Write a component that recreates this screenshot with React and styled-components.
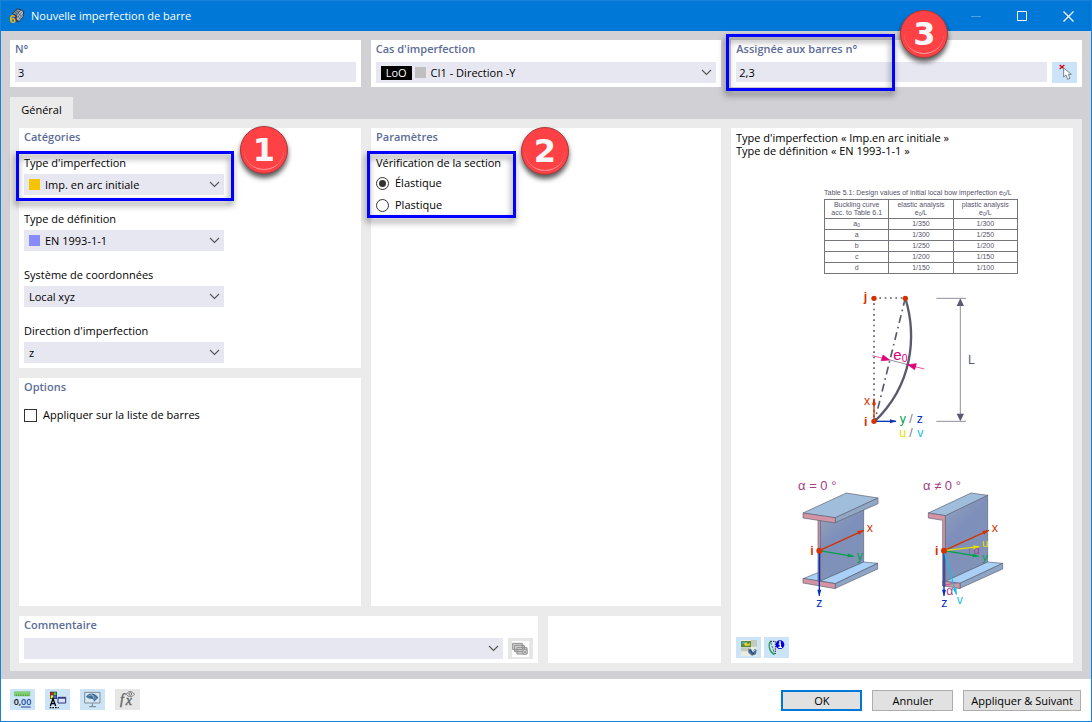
import React, { useState } from "react";
import styled, { createGlobalStyle } from "styled-components";

const GlobalStyle = createGlobalStyle`
  * {
    box-sizing: border-box;
  }
  body {
    margin: 0;
    background: white;
  }
  body, button, input, select {
    font-family: "Open Sans", "Noto Sans", sans-serif;
    font-size: 11px;
    color: black;
  }
`;

const Window = styled.div`
  min-height: 100vh;
  display: flex;
  flex-direction: column;
  border: 1px solid #1a82d6;
  background: white;
`;

const TitleBar = styled.header`
  height: 30px;
  padding-left: 8px;
  display: flex;
  align-items: center;
  gap: 6px;
  background: #0078d7;
`;

const Title = styled.h1`
  flex: 1;
  margin: 0;
  font-size: 11px;
  font-weight: 400;
  line-height: 18px;
  color: white;
`;

const Controls = styled.div`
  display: flex;
`;

const WindowButton = styled.button`
  width: 46px;
  height: 30px;
  padding: 0;
  border: none;
  display: flex;
  align-items: center;
  justify-content: center;
  background: transparent;
  opacity: ${(props) => (props.disabled ? 0.3 : 1)};
`;

const Body = styled.main`
  flex: 1;
  display: flex;
  flex-direction: column;
  padding: 9px 9px 8px;
  background: #d1d0d5;
`;

const TopRow = styled.div`
  display: grid;
  grid-template-columns: repeat(3, minmax(0, 1fr));
  gap: 10px;
`;

const Card = styled.section`
  position: relative;
  padding: 0 5px 4px;
  background: white;
`;

const CardTitle = styled.h2`
  margin: 0 0 ${(props) => (props.$loose ? "9px" : "4px")};
  font-size: 11px;
  font-weight: 600;
  line-height: 18px;
  color: #5c6c98;
`;

const TitleLabel = styled(CardTitle).attrs({ as: "label" })`
  display: block;
`;

const TextInput = styled.input`
  display: block;
  width: 100%;
  height: 20px;
  padding: 1px 3px 0;
  border: none;
  border-radius: 0;
  background: #e7e7f1;
`;

const Row = styled.div`
  display: flex;
  gap: 5px;
`;

const SelectBox = styled.div`
  flex: 1;
  height: 21px;
  padding: 0 4px 0 5px;
  display: flex;
  align-items: center;
  background: #e7e7f1;
`;

const NativeSelect = styled.select`
  flex: 1;
  min-width: 0;
  height: 21px;
  padding: 0 0 1px;
  border: none;
  appearance: none;
  background: transparent;
`;

const Swatch = styled.span`
  width: 11px;
  height: 11px;
  margin-right: 5px;
  background: ${(props) => props.$color};
`;

const Tag = styled.span`
  height: 14px;
  padding: 0 5px;
  margin-right: 3px;
  line-height: 14px;
  color: white;
  background: black;
`;

const Tab = styled.button`
  align-self: flex-start;
  width: 63px;
  height: 22px;
  margin-top: 10px;
  padding: 3px 0 0;
  border: none;
  background: #ebebeb;
`;

const Panel = styled.div`
  flex: 1;
  display: grid;
  grid-template-columns: minmax(0, 342fr) minmax(0, 350fr) minmax(0, 342fr);
  grid-template-rows: 1fr auto;
  gap: 10px;
  padding: 9px 9px 8px;
  background: #ebebeb;
`;

const Column = styled.div`
  display: flex;
  flex-direction: column;
  gap: 10px;
`;

const GrowCard = styled(Card)`
  flex: 1;
`;

const Fields = styled.div`
  width: 200px;
  padding-bottom: 1px;
  display: flex;
  flex-direction: column;
  gap: 16px;
`;

const FieldBox = styled.div`
  position: relative;
`;

const FieldLabel = styled.label`
  display: block;
  margin-bottom: 3px;
  line-height: 16px;
`;

const RadioGroup = styled.fieldset`
  margin: 0;
  padding: 0;
  border: none;
`;

const Legend = styled.legend`
  padding: 0;
  margin-bottom: 2px;
  line-height: 16px;
`;

const Choice = styled.label`
  height: 20px;
  display: flex;
  align-items: center;
  gap: 6px;
  line-height: 16px;
  & + & {
    margin-top: 2px;
  }
`;

const Radio = styled.input`
  appearance: none;
  width: 13px;
  height: 13px;
  margin: 0;
  border: 1px solid #333;
  border-radius: 50%;
  background: white;
  &:checked {
    background: #333;
    background-clip: content-box;
    padding: 2px;
  }
`;

const Checkbox = styled(Radio)`
  border-radius: 0;
`;

const BottomRow = styled.div`
  grid-column: 1 / 3;
  grid-row: 2;
  display: grid;
  grid-template-columns: 3fr 1fr;
  gap: 10px;
`;

const Preview = styled(Card)`
  grid-column: 3;
  grid-row: 1 / 3;
  display: flex;
  flex-direction: column;
  padding: 3px 5px 5px;
`;

const PreviewText = styled.p`
  margin: 0;
  line-height: 13px;
`;

const Figure = styled.figure`
  width: 244px;
  margin: 31px auto 16px;
  display: flex;
  flex-direction: column;
  gap: 20px;
`;

const Bow = styled.svg`
  display: block;
  margin: -14px 0 0 60px;
`;

const ValueTable = styled.table`
  width: 194px;
  margin-left: 44px;
  table-layout: fixed;
  border-collapse: collapse;
  font-family: "Liberation Sans", Arial, sans-serif;
  font-size: 7px;
  line-height: 8px;
  text-align: center;
  color: #55546a;
  caption {
    height: 11px;
    line-height: 10px;
    white-space: nowrap;
    text-align: left;
  }
  th, td {
    padding: 1px 0;
    border: 1px solid #77767c;
    font-weight: 400;
  }
  sub {
    font-size: 5px;
    line-height: 0;
    vertical-align: -1px;
  }
`;

const IconButton = styled.button`
  flex: none;
  width: 25px;
  height: 21px;
  padding: 0;
  border: none;
  display: flex;
  align-items: center;
  justify-content: center;
  background: ${(props) => (props.disabled ? "#e6e6e6" : "#cce4f7")};
`;

const PreviewTools = styled.div`
  margin-top: auto;
  display: flex;
  gap: 3px;
`;

const Footer = styled.footer`
  padding: 10px 9px;
  display: flex;
  gap: 10px;
`;

const Actions = styled.div`
  margin-left: auto;
  padding-right: 1px;
  display: flex;
  gap: 10px;
`;

const Button = styled.button`
  min-width: 81px;
  height: 21px;
  margin-top: 1px;
  padding: 0 7px;
  border: ${(props) => (props.$primary ? "2px solid #0078d7" : "1px solid #adadad")};
  background: #e1e1e1;
`;

// annotations laid over the dialog
const Outline = styled.div`
  position: absolute;
  top: ${(props) => props.$top}px;
  left: ${(props) => props.$left}px;
  width: ${(props) => props.$width}px;
  height: ${(props) => props.$height}px;
  border: 3px solid #0000ff;
  filter: drop-shadow(-1px 4px 3px rgba(0, 0, 0, 0.5));
  pointer-events: none;
`;

const Step = styled.div`
  position: absolute;
  top: ${(props) => props.$top}px;
  left: ${(props) => props.$left}px;
  z-index: 1;
  width: 48px;
  height: 48px;
  border: 1px solid #a83a3e;
  border-radius: 50%;
  font-family: "DejaVu Sans", Verdana, sans-serif;
  font-size: 32px;
  font-weight: 700;
  line-height: 46px;
  text-align: center;
  color: #f7f7fa;
  background: #fd4144;
  box-shadow: 0 4px 5px rgba(0, 0, 0, 0.65);
  &::after {
    content: "";
    position: absolute;
    inset: 3px;
    border-radius: 50%;
    border-bottom: 1px solid #ff9496;
  }
`;

function Chevron() {
  return (
    <svg width="11" height="7" viewBox="0 0 11 7" fill="none" stroke="#555" strokeWidth="1.1">
      <path d="M1 1l4.5 4.4L10 1" />
    </svg>
  );
}

function Select({ id, value, color, tag }) {
  return (
    <SelectBox>
      {tag && <Tag>{tag}</Tag>}
      {color && <Swatch $color={color} />}
      <NativeSelect id={id} defaultValue={value}>
        <option value={value}>{value}</option>
      </NativeSelect>
      <Chevron />
    </SelectBox>
  );
}

function Field({ id, label, value, color, children }) {
  return (
    <FieldBox>
      <FieldLabel htmlFor={id}>{label}</FieldLabel>
      <Select id={id} value={value} color={color} />
      {children}
    </FieldBox>
  );
}

function AppIcon() {
  return (
    <svg width="16" height="16" viewBox="0 0 48 48">
      <path d="M8 17L25 1l12 3 9 8-4 17-13 14-10-3-4-20z" fill="#2d3846" />
      <path d="M12 16L26 4l8 3-12 14z" fill="#8496ab" />
      <path d="M24 22L36 7l6 5-1 14-11 13-7-5z" fill="#b5c2d0" />
      <path d="M17 12l8 6M21 8l8 5M29 17l8 7m-13-1l10 10M38 12L25 29m17-11L29 35" stroke="#394654" strokeWidth="2" />
      <text x="1" y="44" fontFamily="Liberation Sans" fontWeight="700" fontSize="35" fill="#f0b40c">6</text>
    </svg>
  );
}

function PickIcon() {
  return (
    <svg width="20" height="18" viewBox="0 0 60 54" fill="none">
      <path d="M17 3l14 12M31 3L17 15" stroke="#e00010" strokeWidth="4" />
      <path d="M29 12v27l7-6 5 13 7-3-5-12h9z" fill="white" stroke="#77808a" strokeWidth="3" />
    </svg>
  );
}

function CopiesIcon() {
  return (
    <svg width="17" height="16" viewBox="0 0 51 48">
      <path fill="white" d="M0 0h51v48H0z" />
      <g fill="#d2d2d2" stroke="#8f8f8f" strokeWidth="3">
        <path d="M2 7h29v19H2zM8 13h29v19H8zM15 20h30v19H15z" />
        <path d="M33 26h12v13H33zM35 28l8 9m0-9l-8 9" fill="white" />
      </g>
    </svg>
  );
}

function ImageSettingsIcon() {
  return (
    <svg width="16" height="16" viewBox="0 0 48 48">
      <path fill="#e9ecdf" d="M0 0h48v48H0z" />
      <path fill="#c4c9bb" d="M30 0h18v20H30zM0 22h30v12H0z" />
      <path fill="#5c8a3c" d="M0 3h30v18H0z" />
      <path fill="#46a6bd" d="M3 5h12l-6 8H3z" />
      <path fill="#e6d22e" d="M8 11l8-5 4 7 6-4 2 7-14 2z" />
      <path d="M22 26l9 2 3 7 8-9 5 4-2 13-12 4-11-9z" fill="#4b6c98" />
      <path d="M27 31l11 11" stroke="#192c49" strokeWidth="3" />
      <path d="M35 36l8-6" stroke="#c1daf4" strokeWidth="3" />
    </svg>
  );
}

function BowInfoIcon() {
  return (
    <svg width="17" height="16" viewBox="0 0 51 48" fill="none">
      <path d="M8 3C-1 15 4 35 19 44" stroke="#24a465" strokeWidth="4" />
      <path d="M8 4h14v38" stroke="#222" strokeWidth="3" strokeDasharray="4 3" />
      <path d="M8 7l12 35" stroke="#333" strokeWidth="2" strokeDasharray="8 3" />
      <circle cx="36" cy="14" r="13" fill="#0000dd" />
      <path d="M32 12h5v10M31 22h11" stroke="white" strokeWidth="4" />
      <circle cx="36" cy="6" r="3" fill="white" />
    </svg>
  );
}

function UnitsIcon() {
  return (
    <svg width="19" height="17" viewBox="0 0 57 51">
      <path fill="#7ed36e" stroke="#62a756" d="M4 2h47v13H4z" />
      <path d="M10 15v-5m7 5v-5m7 5v-5m7 5v-5m7 5v-5m7 5v-5" stroke="#417c37" strokeWidth="2" />
      <text x="2" y="42" fontFamily="Open Sans" fontSize="27" fontWeight="600" fill="#111">0,</text>
      <text x="24" y="42" fontFamily="Open Sans" fontSize="27" fontWeight="600" fill="#27449b">00</text>
      <path d="M24 48h29" stroke="#27449b" strokeWidth="3" />
    </svg>
  );
}

function DisplayIcon() {
  return (
    <svg width="18" height="18" viewBox="0 0 54 54">
      <path fill="#333" d="M3 2h21v22H3z" />
      <path fill="#ef1212" d="M5 4h8v8H5z" />
      <path fill="#36d036" d="M14 4h8v8h-8z" />
      <path fill="#ffe81a" d="M5 13h8v9H5z" />
      <path fill="#3764ff" d="M14 13h8v9h-8z" />
      <path d="M4 45l8-22 8 22M7 38h10" fill="none" stroke="black" strokeWidth="4" />
      <path d="M2 50h27" stroke="black" strokeWidth="4" strokeDasharray="5 3" />
      <path d="M27 19h23v17H27z" fill="#dce2ff" stroke="#273579" strokeWidth="3" />
      <path d="M27 21h23" stroke="#273579" strokeWidth="4" />
    </svg>
  );
}

function MonitorIcon() {
  return (
    <svg width="17" height="17" viewBox="0 0 51 51" fill="none">
      <path d="M2 4h46v32H2z" fill="#d4e7f5" stroke="#858d94" strokeWidth="3" />
      <path d="M25 37v8M15 47h21" stroke="#777f86" strokeWidth="3" />
      <path d="M6 17C16 4 32 4 43 20L30 32c0-6-4-9-9-9-5 0-9-2-15-6z" fill="#416f99" />
      <path d="M13 15c9-5 17-2 22 8M21 9c4 3 8 8 9 17" stroke="#a8c8df" strokeWidth="2" />
    </svg>
  );
}

function FormulaIcon() {
  return (
    <svg width="17" height="17" viewBox="0 0 51 51" fill="none">
      <text x="3" y="40" fontFamily="Liberation Serif" fontStyle="italic" fontSize="42" fill="#606060" stroke="#606060">f</text>
      <text x="20" y="43" fontFamily="Liberation Serif" fontStyle="italic" fontSize="42" fill="#606060" stroke="#606060">x</text>
      <path d="M22 10c6-11 18-11 24 0-6 9-18 9-24 0z" stroke="#777" strokeWidth="3" />
      <circle cx="34" cy="9" r="4" stroke="#777" strokeWidth="3" />
    </svg>
  );
}

function Arrow({ x1, y1, x2, y2, color, width = 4, size = 20 }) {
  const angle = (Math.atan2(y2 - y1, x2 - x1) * 180) / Math.PI;
  return (
    <g stroke={color} fill={color}>
      <line x1={x1} y1={y1} x2={x2} y2={y2} strokeWidth={width} />
      <path d={`M2 0l-${size} -6v12z`} stroke="none" transform={`translate(${x2} ${y2}) rotate(${angle})`} />
    </g>
  );
}

function BowDrawing() {
  return (
    <Bow width="160" height="170" viewBox="0 0 480 510" fontFamily="Liberation Sans" fontSize="37">
      <g fill="none" stroke="#5a596d">
        <path d="M102 54v370M102 54h95" strokeWidth="5" strokeDasharray="5 11" />
        <path d="M196 54L104 424" strokeWidth="5" strokeDasharray="24 12 5 12" />
        <path d="M196 54C231 170 218 315 104 424" strokeWidth="7" />
        <path d="M289 55h89M289 424h89M361 60v360M150 240l54 14" strokeWidth="2" />
      </g>
      <path d="M361 55l-11 23h22zM361 424l-11-23h22z" fill="#5a596d" />
      <g fill="#e00078" stroke="#e00078" strokeWidth="2">
        <path d="M97 227l52 13M253 267l-50-13" />
        <path d="M149 240l-25 2 5-17zM203 254l26-3-5 18z" />
      </g>
      <Arrow x1={102} y1={424} x2={102} y2={356} color="#d23200" />
      <Arrow x1={102} y1={424} x2={168} y2={424} color="#0036b4" />
      <g fill="#d23200">
        <circle cx="102" cy="55" r="8" />
        <circle cx="196" cy="55" r="8" />
        <circle cx="102" cy="424" r="8" />
        <text x="71" y="63" fontWeight="700">j</text>
        <text x="72" y="439" fontWeight="700">i</text>
        <text x="72" y="374">x</text>
      </g>
      <text x="160" y="239" fontSize="45" fill="#e00078">e<tspan dy="7" fontSize="31">0</tspan></text>
      <text x="384" y="251" fill="#5a596d">L</text>
      <text x="179" y="428" fill="#00a14b">y</text>
      <text x="208" y="428" fill="#77767f">/</text>
      <text x="230" y="428" fill="#0030bd">z</text>
      <text x="178" y="470" fill="#e4df00">u</text>
      <text x="208" y="470" fill="#77767f">/</text>
      <text x="232" y="470" fill="#1bbfe0">v</text>
    </Bow>
  );
}

function BeamDrawing() {
  return (
    <svg width="244" height="150" viewBox="0 0 732 450" fontFamily="Liberation Sans" fontSize="37">
      <defs>
        <linearGradient id="web" x1="0" y1="0" x2="0.5" y2="1">
          <stop offset="0" stopColor="#98a6bd" />
          <stop offset="0.45" stopColor="#7d8fba" />
          <stop offset="1" stopColor="#8293b8" />
        </linearGradient>
      </defs>
      <text x="54" y="61" fontSize="39" fill="#aa3c84">α = 0 °</text>
      <text x="429" y="61" fontSize="39" fill="#aa3c84">α ≠ 0 °</text>
      <g stroke="#5b6073" strokeWidth="2" strokeLinejoin="round">
        {/* full section */}
        <path d="M69 326l48-19v18l80-41 96-4-127 61z" fill="#a9d0f7" />
        <path d="M121 150l130-30v156l-130 58z" fill="url(#web)" />
        <path d="M251 276l42 4-127 61-45-8z" fill="#a9d0f7" />
        <path d="M166 341l127-61v17l-127 58z" fill="#8ea5c6" />
        <path d="M69 325l97 16v15l-97-17z" fill="#d494a4" />
        <path d="M114 149h7v184h-7z" fill="#d494a4" />
        <path d="M69 129L199 69l95 15-128 60z" fill="#a0bddb" />
        <path d="M166 143l128-59v17l-128 57z" fill="#91a7c4" />
        <path d="M69 129l97 14v16l-97-15z" fill="#d494a4" />
        {/* half section */}
        <path d="M496 136l127-61v201l-127 58z" fill="url(#web)" />
        <path d="M623 276l45 4-128 60-44-6z" fill="#a9d0f7" />
        <path d="M540 340l128-60v17l-128 58z" fill="#8ea5c6" />
        <path d="M488 333l52 7v16l-52-9z" fill="#d494a4" />
        <path d="M445 129l128-60 50 7-127 61z" fill="#a0bddb" />
        <path d="M445 129l51 8v212l-8-2V151l-43-7z" fill="#d494a4" />
      </g>
      <path d="M569 235q-2 10 0 17M494 345l34-6" fill="none" stroke="#aa3c84" strokeWidth="2" />
      <text x="581" y="252" fontSize="32" fill="#aa3c84">α</text>
      <text x="499" y="376" fill="#aa3c84">α</text>

      <Arrow x1={118} y1={242} x2={251} y2={181} color="#d23200" />
      <Arrow x1={118} y1={242} x2={221} y2={259} color="#00a14b" />
      <Arrow x1={118} y1={242} x2={118} y2={377} color="#0030bd" />
      <Arrow x1={492} y1={242} x2={626} y2={181} color="#d23200" />
      <Arrow x1={492} y1={242} x2={596} y2={259} color="#00a14b" />
      <Arrow x1={492} y1={242} x2={598} y2={230} color="#e4df00" />
      <Arrow x1={492} y1={242} x2={492} y2={377} color="#0030bd" />
      <Arrow x1={492} y1={242} x2={529} y2={373} color="#1bbfe0" />
      <g fill="#d23200">
        <circle cx="118" cy="242" r="9" />
        <circle cx="492" cy="242" r="9" />
        <text x="91" y="255" fontWeight="700">i</text>
        <text x="465" y="255" fontWeight="700">i</text>
        <text x="260" y="185">x</text>
        <text x="635" y="185">x</text>
      </g>
      <text x="230" y="270" fill="#00a14b">y</text>
      <text x="606" y="272" fontSize="34" fill="#00a14b">y</text>
      <text x="606" y="232" fontSize="34" fill="#e4df00">u</text>
      <text x="109" y="411" fill="#0030bd">z</text>
      <text x="484" y="411" fill="#0030bd">z</text>
      <text x="530" y="403" fill="#1bbfe0">v</text>
    </svg>
  );
}

const rows = [
  [<>a<sub>0</sub></>, "1/350", "1/300"],
  ["a", "1/300", "1/250"],
  ["b", "1/250", "1/200"],
  ["c", "1/200", "1/150"],
  ["d", "1/150", "1/100"],
];

function Values() {
  return (
    <ValueTable>
      <caption>Table 5.1: Design values of initial local bow imperfection e<sub>0</sub>/L</caption>
      <thead>
        <tr>
          <th>Buckling curve<br />acc. to Table 6.1</th>
          <th>elastic analysis<br />e<sub>0</sub>/L</th>
          <th>plastic analysis<br />e<sub>0</sub>/L</th>
        </tr>
      </thead>
      <tbody>
        {rows.map((row, i) => (
          <tr key={i}>
            {row.map((cell, j) => <td key={j}>{cell}</td>)}
          </tr>
        ))}
      </tbody>
    </ValueTable>
  );
}

function WindowControls() {
  return (
    <Controls>
      <WindowButton disabled aria-label="Réduire">
        <svg width="11" height="11"><path d="M0 5.5h10" stroke="white" /></svg>
      </WindowButton>
      <WindowButton aria-label="Agrandir">
        <svg width="11" height="11"><path d="M.5 .5h9v9H.5z" fill="none" stroke="white" /></svg>
      </WindowButton>
      <WindowButton aria-label="Fermer">
        <svg width="11" height="11"><path d="M.5 .5l10 10M10.5 .5l-10 10" fill="none" stroke="white" strokeWidth="1.2" /></svg>
      </WindowButton>
    </Controls>
  );
}

function App() {
  const [section, setSection] = useState("elastique");

  return (
    <>
      <GlobalStyle />
      <Window>
        <TitleBar>
          <AppIcon />
          <Title>Nouvelle imperfection de barre</Title>
          <WindowControls />
        </TitleBar>
        <Body>
          <TopRow>
            <Card>
              <TitleLabel htmlFor="numero">N°</TitleLabel>
              <TextInput id="numero" defaultValue="3" />
            </Card>
            <Card>
              <TitleLabel htmlFor="cas">Cas d'imperfection</TitleLabel>
              <Row>
                <Select id="cas" value="CI1 - Direction -Y" tag="LoO" color="#c0c0c0" />
              </Row>
            </Card>
            <Card>
              <TitleLabel htmlFor="barres">Assignée aux barres n°</TitleLabel>
              <Row>
                <TextInput id="barres" defaultValue="2,3" />
                <IconButton aria-label="Sélectionner les barres"><PickIcon /></IconButton>
              </Row>
              <Outline $top={-6} $left={-5} $width={169} $height={57} />
              <Step $top={-30} $left={169}>3</Step>
            </Card>
          </TopRow>

          <Tab>Général</Tab>
          <Panel>
            <Column>
              <Card>
                <CardTitle $loose>Catégories</CardTitle>
                <Fields>
                  <Field id="type" label="Type d'imperfection" value="Imp. en arc initiale" color="#f7c400">
                    <Outline $top={-4} $left={-8} $width={218} $height={50} />
                    <Step $top={-29} $left={216}>1</Step>
                  </Field>
                  <Field id="definition" label="Type de définition" value="EN 1993-1-1" color="#8a8aff" />
                  <Field id="systeme" label="Système de coordonnées" value="Local xyz" />
                  <Field id="direction" label="Direction d'imperfection" value="z" />
                </Fields>
              </Card>
              <GrowCard>
                <CardTitle $loose>Options</CardTitle>
                <Choice>
                  <Checkbox type="checkbox" />
                  Appliquer sur la liste de barres
                </Choice>
              </GrowCard>
            </Column>

            <Card>
              <CardTitle $loose>Paramètres</CardTitle>
              <FieldBox>
                <RadioGroup>
                  <Legend>Vérification de la section</Legend>
                  <Choice>
                    <Radio type="radio" name="section" checked={section === "elastique"} onChange={() => setSection("elastique")} />
                    Élastique
                  </Choice>
                  <Choice>
                    <Radio type="radio" name="section" checked={section === "plastique"} onChange={() => setSection("plastique")} />
                    Plastique
                  </Choice>
                </RadioGroup>
                <Outline $top={-4} $left={-9} $width={149} $height={67} />
                <Step $top={-28} $left={145}>2</Step>
              </FieldBox>
            </Card>

            <BottomRow>
              <Card>
                <TitleLabel htmlFor="commentaire">Commentaire</TitleLabel>
                <Row>
                  <Select id="commentaire" value="" />
                  <IconButton disabled aria-label="Bibliothèque de commentaires"><CopiesIcon /></IconButton>
                </Row>
              </Card>
              <Card />
            </BottomRow>

            <Preview>
              <PreviewText>
                Type d'imperfection « Imp.en arc initiale »<br />
                Type de définition « EN 1993-1-1 »
              </PreviewText>
              <Figure>
                <Values />
                <BowDrawing />
                <BeamDrawing />
              </Figure>
              <PreviewTools>
                <IconButton aria-label="Paramètres de l'image"><ImageSettingsIcon /></IconButton>
                <IconButton aria-label="Informations"><BowInfoIcon /></IconButton>
              </PreviewTools>
            </Preview>
          </Panel>
        </Body>
        <Footer>
          <IconButton aria-label="Unités"><UnitsIcon /></IconButton>
          <IconButton aria-label="Affichage"><DisplayIcon /></IconButton>
          <IconButton aria-label="Vue"><MonitorIcon /></IconButton>
          <IconButton disabled aria-label="Formule"><FormulaIcon /></IconButton>
          <Actions>
            <Button $primary>OK</Button>
            <Button>Annuler</Button>
            <Button>Appliquer &amp; Suivant</Button>
          </Actions>
        </Footer>
      </Window>
    </>
  );
}

export default App;
